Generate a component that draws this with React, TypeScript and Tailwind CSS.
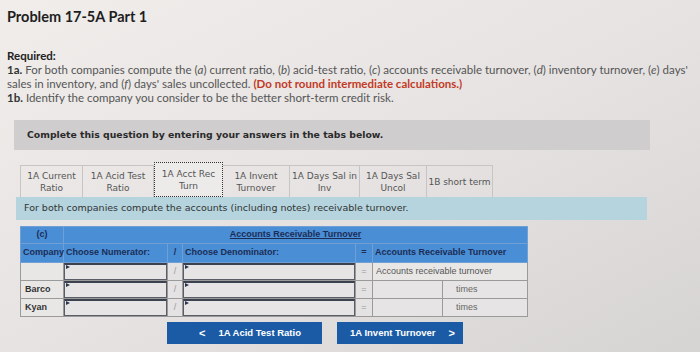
import React from "react";

const Tri = () => (
  <span className="absolute left-[1px] top-[0px] w-0 h-0 border-t-[2.5px] border-b-[2.5px] border-l-[4px] border-t-transparent border-b-transparent border-l-[#2a3550]" />
);

const Sel = () => (
  <div className="relative h-full border border-[#5a5d66] border-t-[2px] border-t-[#3c4150] bg-[#e6e4e4]">
    <Tri />
  </div>
);

export default function App() {
  const tabs = [
    { l1: "1A Current", l2: "Ratio", w: "w-[63px]" },
    { l1: "1A Acid Test", l2: "Ratio", w: "w-[71px]" },
    { l1: "1A Acct Rec", l2: "Turn", w: "w-[69px]", active: true },
    { l1: "1A Invent", l2: "Turnover", w: "w-[67px]" },
    { l1: "1A Days Sal in", l2: "Inv", w: "w-[70px]" },
    { l1: "1A Days Sal", l2: "Uncol", w: "w-[67px]" },
    { l1: "1B short term", l2: "", w: "w-[66px]" },
  ];
  const rows = ["", "Barco", "Kyan"];
  return (
    <div className="w-[700px] h-[352px] overflow-hidden bg-gradient-to-br from-[#f0edeb] via-[#e6e3e2] to-[#d6d3d3] font-['Lato',sans-serif]">
      <div className="pl-[7px] pt-[7px]">
        <h1 className="font-['Lato',sans-serif] text-[14.5px] leading-[20px] font-bold text-[#1e1e1e]">
          Problem 17-5A Part 1
        </h1>
        <div className="mt-[22px] text-[11.5px] leading-[14px] text-[#555]">
          <div className="font-bold text-[#222]">Required:</div>
          <div>
            <b className="text-[#333]">1a.</b> For both companies compute the (<i>a</i>) current ratio, (<i>b</i>) acid-test ratio, (<i>c</i>) accounts receivable turnover, (<i>d</i>) inventory turnover, (<i>e</i>) days' sales in inventory, and (<i>f</i>) days' sales uncollected.{" "}
            <span className="font-bold text-[#c23a26]">(Do not round intermediate calculations.)</span>
          </div>
          <div>
            <b className="text-[#333]">1b.</b> Identify the company you consider to be the better short-term credit risk.
          </div>
        </div>
      </div>

      <div className="ml-[14px] mt-[15px] w-[636px] h-[30px] bg-[#cfcdcd] flex items-center pl-[13px] font-['DejaVu_Sans',sans-serif] text-[9.3px] font-bold text-[#2a2a2a]">
        Complete this question by entering your answers in the tabs below.
      </div>

      <div className="ml-[20px] mt-[12px] flex items-end h-[35px] font-['DejaVu_Sans',sans-serif] text-[9px] leading-[12px] text-[#555]">
        {tabs.map((t, i) => (
          <div
            key={i}
            className={`${t.w} flex flex-col items-center justify-center text-center whitespace-nowrap ${
              t.active
                ? "h-[35px] bg-[#ecebea] border border-dotted border-[#333]"
                : "h-[32px] border-t border-r border-[#c6c4c4] " + (i === 0 ? "border-l" : "")
            }`}
          >
            <div>{t.l1}</div>
            {t.l2 && <div>{t.l2}</div>}
          </div>
        ))}
      </div>

      <div className="ml-[16px] w-[631px] h-[23px] bg-[#b5d4de] flex items-center pl-[8px] font-['DejaVu_Sans',sans-serif] text-[9.5px] text-[#333]">
        For both companies compute the accounts (including notes) receivable turnover.
      </div>

      <table className="ml-[20px] mt-[6px] border-collapse font-['Liberation_Sans',sans-serif] text-[9px] table-fixed w-[507px]">
        <colgroup>
          <col className="w-[43px]" />
          <col className="w-[104px]" />
          <col className="w-[15px]" />
          <col className="w-[173px]" />
          <col className="w-[17px]" />
          <col className="w-[70px]" />
          <col className="w-[85px]" />
        </colgroup>
        <tbody>
          <tr className="h-[17px] bg-[#4a8ed6] text-[#1b2d55] font-bold">
            <td className="border border-[#6f9fd4] text-center">(c)</td>
            <td colSpan={6} className="border border-[#6f9fd4] text-center underline">
              Accounts Receivable Turnover
            </td>
          </tr>
          <tr className="h-[19px] bg-[#4a8ed6] text-[#1b2d55] font-bold">
            <td className="border border-[#6f9fd4] pl-[2px]">Company</td>
            <td className="border border-[#6f9fd4] pl-[2px]">Choose Numerator:</td>
            <td className="border border-[#6f9fd4] text-center">/</td>
            <td className="border border-[#6f9fd4] pl-[2px]">Choose Denominator:</td>
            <td className="border border-[#6f9fd4] text-center">=</td>
            <td colSpan={2} className="border border-[#6f9fd4] pl-[2px]">
              Accounts Receivable Turnover
            </td>
          </tr>
          {rows.map((r, i) => (
            <tr key={i} className="h-[18px] text-[#333]">
              <td className="border border-[#9a9a9a] bg-[#e9e7e6] pl-[4px] font-bold">{r}</td>
              <td className="border border-[#9a9a9a] p-0 h-[18px]">
                <Sel />
              </td>
              <td className="border border-[#9a9a9a] bg-[#e4e2e2] text-center text-[#999]">/</td>
              <td className="border border-[#9a9a9a] p-0 h-[18px]">
                <Sel />
              </td>
              <td className="border border-[#9a9a9a] bg-[#e4e2e2] text-center text-[#999]">=</td>
              {i === 0 ? (
                <td colSpan={2} className="border border-[#9a9a9a] bg-[#e9e7e6] pl-[3px] text-[#555]">
                  Accounts receivable turnover
                </td>
              ) : (
                <>
                  <td className="border border-[#9a9a9a] bg-[#e6e4e4]"></td>
                  <td className="border border-[#9a9a9a] bg-[#e6e4e4] pl-[13px] text-[#666]">times</td>
                </>
              )}
            </tr>
          ))}
        </tbody>
      </table>

      <div className="ml-[167px] mt-[5px] flex gap-[15px] font-['Liberation_Sans',sans-serif] text-[9.5px] font-bold text-white">
        <div className="w-[155px] h-[22px] bg-[#1b5ba6] flex items-center pl-[32px]">
          <span className="mr-[13px] text-[11px]">&lt;</span>1A Acid Test Ratio
        </div>
        <div className="w-[126px] h-[22px] bg-[#1b5ba6] flex items-center pl-[13px]">
          1A Invent Turnover<span className="ml-[13px] text-[11px]">&gt;</span>
        </div>
      </div>
    </div>
  );
}
